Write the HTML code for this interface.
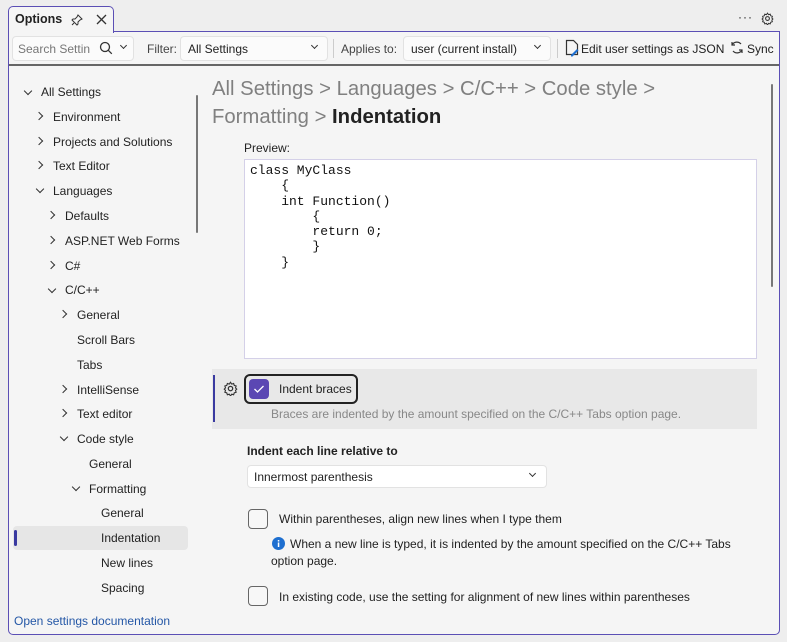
<!DOCTYPE html>
<html><head><meta charset="utf-8"><style>
*{box-sizing:border-box;margin:0;padding:0}
body{width:787px;height:642px;background:#eeeeee;font-family:"Liberation Sans",sans-serif;font-size:12px;color:#222;position:relative;overflow:hidden}
.a{position:absolute;white-space:nowrap}
.win{position:absolute;left:8px;top:31px;width:772px;height:604px;background:#f5f5f5;border:1px solid #5b4fb5;border-radius:0 0 5px 5px}
.tab{position:absolute;left:8px;top:6px;width:106px;height:27px;background:#f5f5f5;border:1px solid #5b4fb5;border-bottom:none;border-radius:5px 5px 0 0;z-index:2}
.box{position:absolute;background:#fbfbfb;border:1px solid #e2e2e2;border-radius:4px}
.chev{position:absolute;width:6px;height:6px;border-right:1.3px solid #333;border-bottom:1.3px solid #333}
.r{transform:rotate(-45deg)}.d{transform:rotate(45deg)}
.cb{position:absolute;width:20px;height:20px;border:1.5px solid #666;border-radius:4px;background:#f7f7f7}
.t{position:absolute;white-space:nowrap;line-height:16px}
</style></head><body>
<div class="tab"><span class="a" style="left:6px;top:5px;font-weight:bold;font-size:12.5px">Options</span>
<svg class="a" style="left:62px;top:7px" width="12" height="12" viewBox="0 0 12 12"><path d="M7 1l4 4-2 1-2 2 0 2-1 1-5-5 1-1h2l2-2z M3 9l-2 2" fill="none" stroke="#333" stroke-width="1"/></svg>
<svg class="a" style="left:87px;top:7px" width="11" height="11"><path d="M1 1l9 9M10 1l-9 9" stroke="#333" stroke-width="1.3"/></svg></div>
<span class="a" style="left:738px;top:10px;font-size:12px;letter-spacing:1px">···</span>
<svg class="a" style="left:761px;top:12px" width="13" height="13" viewBox="0 0 24 24"><circle cx="12" cy="12" r="3.5" fill="none" stroke="#333" stroke-width="2"/><path d="M12 2l2 3 3-1 1 3 3 1-1 3 2 2-2 2 1 3-3 1-1 3-3-1-2 3-2-3-3 1-1-3-3-1 1-3-2-2 2-2-1-3 3-1 1-3 3 1z" fill="none" stroke="#333" stroke-width="1.8"/></svg>
<div class="win">
<div class="a" style="left:0;top:32px;width:770px;height:1.5px;background:#666"></div>
</div>
<!-- toolbar -->
<div class="box" style="left:12px;top:36px;width:122px;height:25px"></div>
<span class="a" style="left:18px;top:42px;color:#777">Search Settin</span>
<svg class="a" style="left:99px;top:41px" width="14" height="14"><circle cx="6" cy="6" r="4.5" fill="none" stroke="#333" stroke-width="1.3"/><path d="M9.3 9.3l3.5 3.5" stroke="#333" stroke-width="1.3"/></svg>
<div class="chev d" style="left:121px;top:43px;width:5px;height:5px"></div>
<span class="a" style="left:147px;top:42px;color:#444">Filter:</span>
<div class="box" style="left:180px;top:36px;width:148px;height:25px"></div>
<span class="a" style="left:188px;top:42px">All Settings</span>
<div class="chev d" style="left:312px;top:43px;width:5px;height:5px"></div>
<div class="a" style="left:333px;top:39px;width:1px;height:19px;background:#ccc"></div>
<span class="a" style="left:341px;top:42px;color:#444">Applies to:</span>
<div class="box" style="left:403px;top:36px;width:148px;height:25px"></div>
<span class="a" style="left:411px;top:42px">user (current install)</span>
<div class="chev d" style="left:535px;top:43px;width:5px;height:5px"></div>
<div class="a" style="left:557px;top:39px;width:1px;height:19px;background:#ccc"></div>
<svg class="a" style="left:565px;top:39px" width="14" height="18"><path d="M1.5 1.5h7l4 4v10h-11z" fill="none" stroke="#333" stroke-width="1.2"/><path d="M6 16l6-6 1.5 1.5-6 6H6z" fill="#1e6fd0"/></svg>
<span class="a" style="left:581px;top:42px">Edit user settings as JSON</span>
<svg class="a" style="left:730px;top:40px" width="14" height="15"><path d="M11 4A5.5 5.5 0 0 0 2 5M3 11a5.5 5.5 0 0 0 9-1M2 2v3h3M12 13v-3H9" fill="none" stroke="#333" stroke-width="1.2"/></svg>
<span class="a" style="left:747px;top:42px">Sync</span>
<!-- tree -->
<div class="chev d" style="left:25px;top:88px"></div><span class="t" style="left:41px;top:84px">All Settings</span>
<div class="chev r" style="left:36px;top:113px"></div><span class="t" style="left:53px;top:109px">Environment</span>
<div class="chev r" style="left:36px;top:138px"></div><span class="t" style="left:53px;top:134px">Projects and Solutions</span>
<div class="chev r" style="left:36px;top:162px"></div><span class="t" style="left:53px;top:158px">Text Editor</span>
<div class="chev d" style="left:37px;top:186px"></div><span class="t" style="left:53px;top:183px">Languages</span>
<div class="chev r" style="left:48px;top:212px"></div><span class="t" style="left:65px;top:208px">Defaults</span>
<div class="chev r" style="left:48px;top:237px"></div><span class="t" style="left:65px;top:233px">ASP.NET Web Forms</span>
<div class="chev r" style="left:48px;top:262px"></div><span class="t" style="left:65px;top:258px">C#</span>
<div class="chev d" style="left:49px;top:286px"></div><span class="t" style="left:65px;top:282px">C/C++</span>
<div class="chev r" style="left:60px;top:311px"></div><span class="t" style="left:77px;top:307px">General</span>
<span class="t" style="left:77px;top:332px">Scroll Bars</span>
<span class="t" style="left:77px;top:357px">Tabs</span>
<div class="chev r" style="left:60px;top:386px"></div><span class="t" style="left:77px;top:382px">IntelliSense</span>
<div class="chev r" style="left:60px;top:410px"></div><span class="t" style="left:77px;top:406px">Text editor</span>
<div class="chev d" style="left:61px;top:434px"></div><span class="t" style="left:77px;top:431px">Code style</span>
<span class="t" style="left:89px;top:456px">General</span>
<div class="chev d" style="left:73px;top:484px"></div><span class="t" style="left:89px;top:481px">Formatting</span>
<span class="t" style="left:101px;top:505px">General</span>
<div class="a" style="left:13px;top:526px;width:175px;height:24px;background:#e6e6e6;border-radius:4px"></div>
<div class="a" style="left:14px;top:530px;width:3px;height:16px;background:#3a3aa0;border-radius:2px"></div>
<span class="t" style="left:101px;top:530px">Indentation</span>
<span class="t" style="left:101px;top:555px">New lines</span>
<span class="t" style="left:101px;top:580px">Spacing</span>
<span class="t" style="left:14px;top:613px;color:#2457a6">Open settings documentation</span>
<div class="a" style="left:196px;top:95px;width:2px;height:138px;background:#777;border-radius:1px"></div>
<div class="a" style="left:771px;top:84px;width:2px;height:203px;background:#777;border-radius:1px"></div>
<!-- right -->
<span class="a" style="left:212px;top:77px;font-size:20.3px;color:#808080;line-height:24px">All Settings &gt; Languages &gt; C/C++ &gt; Code style &gt;</span>
<span class="a" style="left:212px;top:105px;font-size:20.3px;color:#808080;line-height:24px">Formatting &gt; <span style="color:#222;font-weight:bold">Indentation</span></span>
<span class="t" style="left:244px;top:140px">Preview:</span>
<div class="a" style="left:244px;top:159px;width:513px;height:200px;background:#fff;border:1px solid #d4d0e8"></div>
<pre class="a" style="left:250px;top:163px;font-family:'Liberation Mono',monospace;font-size:13px;line-height:15.3px;color:#111;white-space:pre">class MyClass
    {
    int Function()
        {
        return 0;
        }
    }</pre>
<div class="a" style="left:212px;top:369px;width:545px;height:60px;background:#e8e8e8"></div>
<div class="a" style="left:213px;top:375px;width:2px;height:47px;background:#3a3aa0"></div>
<svg class="a" style="left:223px;top:381px" width="15" height="15" viewBox="0 0 24 24"><circle cx="12" cy="12" r="3.5" fill="none" stroke="#333" stroke-width="2"/><path d="M12 2l2 3 3-1 1 3 3 1-1 3 2 2-2 2 1 3-3 1-1 3-3-1-2 3-2-3-3 1-1-3-3-1 1-3-2-2 2-2-1-3 3-1 1-3 3 1z" fill="none" stroke="#333" stroke-width="1.8"/></svg>
<div class="a" style="left:244px;top:374px;width:114px;height:30px;border:2px solid #222;border-radius:6px"></div>
<div class="a" style="left:249px;top:379px;width:20px;height:20px;background:#5b47b3;border-radius:4px"></div>
<svg class="a" style="left:253px;top:384px" width="12" height="10"><path d="M1.5 5l3 3 6-6" fill="none" stroke="#fff" stroke-width="1.3"/></svg>
<span class="t" style="left:279px;top:381px">Indent braces</span>
<span class="t" style="left:271px;top:406px;color:#888">Braces are indented by the amount specified on the C/C++ Tabs option page.</span>
<span class="t" style="left:247px;top:443px;font-weight:bold">Indent each line relative to</span>
<div class="box" style="left:247px;top:465px;width:300px;height:23px;background:#fff"></div>
<span class="t" style="left:254px;top:469px">Innermost parenthesis</span>
<div class="chev d" style="left:530px;top:471px;width:5px;height:5px"></div>
<div class="cb" style="left:248px;top:509px"></div>
<span class="t" style="left:279px;top:511px">Within parentheses, align new lines when I type them</span>
<svg class="a" style="left:272px;top:537px" width="13" height="13"><circle cx="6.5" cy="6.5" r="6.5" fill="#1e6fd0"/><rect x="5.8" y="5.5" width="1.5" height="4.5" fill="#fff"/><rect x="5.8" y="3" width="1.5" height="1.5" fill="#fff"/></svg>
<span class="t" style="left:290px;top:536px">When a new line is typed, it is indented by the amount specified on the C/C++ Tabs</span>
<span class="t" style="left:271px;top:553px">option page.</span>
<div class="cb" style="left:248px;top:586px"></div>
<span class="t" style="left:279px;top:589px">In existing code, use the setting for alignment of new lines within parentheses</span>
</body></html>
